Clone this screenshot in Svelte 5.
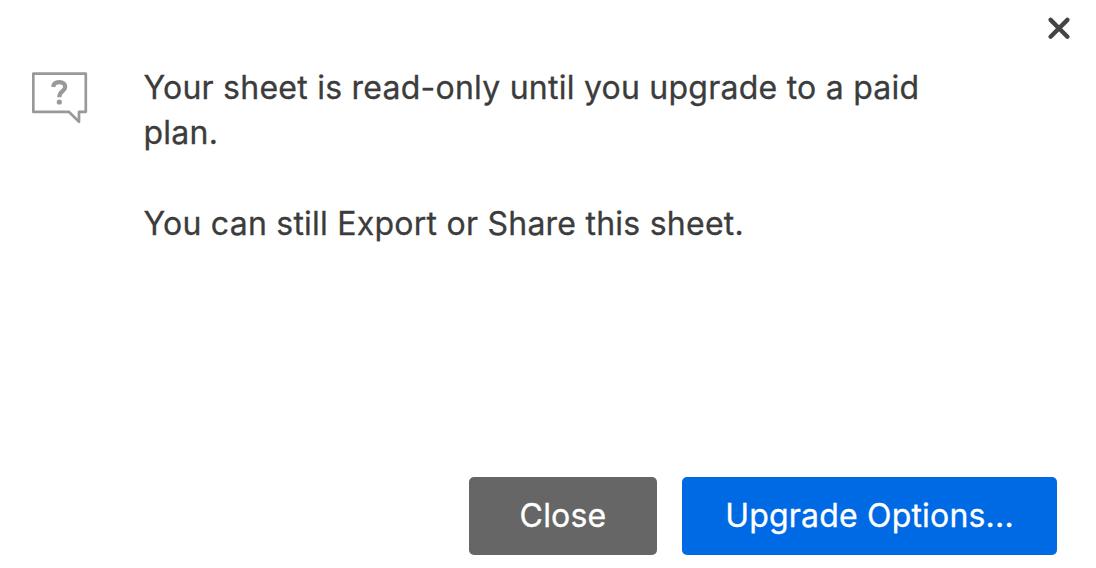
<script lang="ts">
  let open = $state(true);

  function close() {
    open = false;
  }
</script>

{#if open}
  <div class="dialog" role="dialog" aria-labelledby="message">
    <header class="dialog-header">
      <button class="dismiss" aria-label="Dismiss" onclick={close}>
        <svg width="24" height="24" viewBox="0 0 24 24">
          <path d="M3.6 3.9 L20.4 20.7 M20.4 3.9 L3.6 20.7" />
        </svg>
      </button>
    </header>

    <div class="dialog-body">
      <svg class="icon" width="56" height="54" viewBox="0 0 56 54">
        <path class="bubble" d="M1.3 1.6 H53.8 V39.8 H47 V49.8 L36.8 39.8 H1.3 Z" />
        <path class="hook" d="M21.2 15 C21.4 11.8 23.8 10.1 27.3 10.1 C31 10.1 33.2 12 33.2 14.9 C33.2 19 27.3 19 27.3 25.2" />
        <circle cx="27.3" cy="30" r="2.6" />
      </svg>
      <div class="message" id="message">
        <p>Your sheet is read-only until you upgrade to a paid plan.</p>
        <p>You can still Export or Share this sheet.</p>
      </div>
    </div>

    <footer class="dialog-footer">
      <button class="btn secondary" onclick={close}>Close</button>
      <button class="btn primary">Upgrade Options...</button>
    </footer>
  </div>
{/if}

<style>
  :global(body) {
    background-color: #fff;
  }

  .dialog {
    box-sizing: border-box;
    display: flex;
    flex-direction: column;
    width: 100%;
    height: 568px;
    padding: 16px 39px 13px 32px;
    font-family: Inter, sans-serif;
    color: #3c3c3c;
  }

  .dialog-header {
    display: flex;
    justify-content: flex-end;
    margin-right: -14px;
  }

  .dismiss {
    padding: 0;
    border: none;
    background: none;
    line-height: 0;
    cursor: pointer;
  }

  .dismiss path {
    fill: none;
    stroke: #444;
    stroke-width: 4.4;
    stroke-linecap: round;
  }

  .dialog-body {
    display: flex;
    align-items: flex-start;
    flex: 1;
    gap: 55.5px;
    padding-top: 25px;
  }

  .icon {
    flex: none;
    margin-top: 7px;
  }

  .bubble,
  .hook {
    fill: none;
    stroke: #999;
    stroke-width: 2.7;
    stroke-linejoin: round;
  }

  .hook {
    stroke-width: 4.2;
  }

  .icon circle {
    fill: #999;
  }

  .message {
    width: 800px;
    font-size: 32px;
    line-height: 45.3px;
    letter-spacing: 0.24px;
    -webkit-text-stroke: 0.3px currentColor;
  }

  .message p {
    margin: 0 0 45px;
  }

  .dialog-footer {
    display: flex;
    justify-content: flex-end;
    gap: 25px;
  }

  .btn {
    height: 78px;
    padding: 0 0 2px;
    border: none;
    border-radius: 5px;
    font-family: inherit;
    font-size: 32px;
    letter-spacing: 0.19px;
    -webkit-text-stroke: 0.3px currentColor;
    color: #fff;
    cursor: pointer;
  }

  .secondary {
    width: 188px;
    background-color: #666;
  }

  .primary {
    width: 375px;
    background-color: #006ae5;
  }
</style>
